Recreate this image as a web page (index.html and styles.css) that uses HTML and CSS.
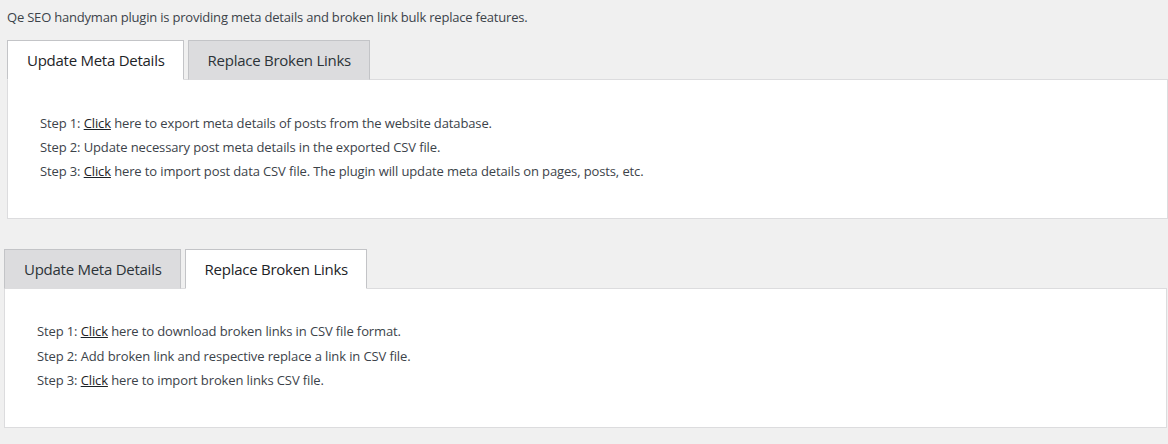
FILE: index.html
```html
<!DOCTYPE html>
<html lang="en">
<head>
<meta charset="utf-8">
<title>Qe SEO Handyman</title>
<link rel="stylesheet" href="styles.css">
</head>
<body>
  <section class="block block-top">
    <p class="intro">Qe SEO handyman plugin is providing meta details and broken link bulk replace features.</p>
    <nav class="tabs">
      <span class="tab tab-active">Update Meta Details</span>
      <span class="tab">Replace Broken Links</span>
    </nav>
    <div class="panel panel-top">
      <p class="step">Step 1: <a class="link" href="#">Click</a> here to export meta details of posts from the website database.</p>
      <p class="step">Step 2: Update necessary post meta details in the exported CSV file.</p>
      <p class="step">Step 3: <a class="link" href="#">Click</a> here to import post data CSV file. The plugin will update meta details on pages, posts, etc.</p>
    </div>
  </section>
  <section class="block block-bottom">
    <nav class="tabs">
      <span class="tab">Update Meta Details</span>
      <span class="tab tab-active">Replace Broken Links</span>
    </nav>
    <div class="panel panel-bottom">
      <p class="step">Step 1: <a class="link" href="#">Click</a> here to download broken links in CSV file format.</p>
      <p class="step">Step 2: Add broken link and respective replace a link in CSV file.</p>
      <p class="step">Step 3: <a class="link" href="#">Click</a> here to import broken links CSV file.</p>
    </div>
  </section>
</body>
</html>
```

FILE: styles.css
```css
* { box-sizing: border-box; }
html, body { margin: 0; padding: 0; }
body {
  background: #f0f0f0;
  font-family: "Open Sans", "Noto Sans", sans-serif;
  color: #3c434a;
  font-size: 13px;
  width: 1168px;
  height: 444px;
  overflow: hidden;
}
.block-top { padding-left: 7px; }
.block-bottom { padding-left: 4px; margin-top: 30px; width: 1167px; }
.intro {
  margin: 0;
  padding-top: 7px;
  line-height: 20px;
  height: 40px;
  letter-spacing: -0.2px;
}
.tabs {
  display: flex;
  gap: 4px;
  align-items: flex-end;
}
.tab {
  position: relative;
  z-index: 1;
  height: 40px;
  margin-bottom: -1px;
  padding: 0 18px 0 19px;
  display: flex;
  align-items: center;
  font-size: 15px;
  letter-spacing: -0.26px;
  color: #2c3338;
  background: #dcdcde;
  border: 1px solid #c3c4c7;
  border-bottom-color: #dcdcde;
}
.tab-active {
  background: #fff;
  border-bottom-color: #fff;
  color: #1d2327;
}
.panel {
  background: #fff;
  border: 1px solid #dcdcde;
  padding-left: 32px;
}
.panel-top { padding-top: 31px; padding-bottom: 35px; }
.panel-bottom { padding-top: 30px; padding-bottom: 34px; }
.step {
  margin: 0;
  line-height: 24px;
  letter-spacing: -0.12px;
}
.panel-bottom .step { line-height: 24.5px; }
.link { color: #1d2327; text-decoration: underline; }
```
